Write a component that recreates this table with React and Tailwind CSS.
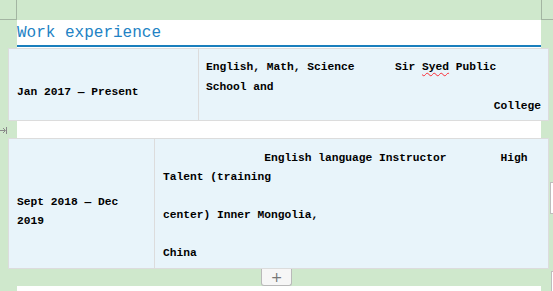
import React from "react";

const mono = { fontFamily: '"Liberation Mono", "DejaVu Sans Mono", monospace' };

function App() {
    return (
        <div className="relative w-[553px] h-[291px] overflow-hidden bg-[#cfe8cc] text-black" style={mono}>
            {/* crop marks */}
            <div className="flex h-[20px]">
                <div className="w-[17px] border-r border-b border-[#a3b5a2]"></div>
                <div className="w-[524px]"></div>
                <div className="flex-1 border-l border-b border-[#a3b5a2]"></div>
            </div>

            {/* title */}
            <div className="ml-[17px] w-[524px] bg-white">
                <div className="h-[27px] border-b-2 border-[#1a7fbd] text-[16px] leading-[25px] text-[#2282c4] pt-px">
                    Work experience
                </div>
                <div className="h-px"></div>
            </div>

            {/* row 1 */}
            <div className="ml-[8px] w-[541px] h-[73px] flex border border-[#dcdcdc] bg-[#e8f4fa] font-bold text-[11.25px] leading-[19.5px]">
                <div className="w-[190px] border-r border-[#dcdcdc] pl-[8px] pt-[34px] whitespace-pre">Jan 2017 — Present</div>
                <div className="flex-1 pl-[7px] pr-[7px] pt-[9px] whitespace-pre">
                    <div>English, Math, Science      Sir <span className="underline decoration-wavy decoration-red-500 decoration-1 underline-offset-2">Syed</span> Public</div>
                    <div>School and</div>
                    <div className="text-right">College</div>
                </div>
            </div>

            {/* gap */}
            <div className="flex h-[17px]">
                <div className="w-[17px] flex items-center">
                    <svg width="7" height="9" viewBox="0 0 7 9" className="mt-[1px]">
                        <path d="M0 4.5h5M3 2l2.5 2.5L3 7M6.5 1v7" stroke="#8a8a8a" strokeWidth="1" fill="none" />
                    </svg>
                </div>
                <div className="w-[524px] bg-white"></div>
            </div>

            {/* row 2 */}
            <div className="ml-[8px] w-[541px] h-[131px] flex border border-[#dcdcdc] bg-[#e8f4fa] font-bold text-[11.25px] leading-[19px]">
                <div className="w-[146px] border-r border-[#dcdcdc] pl-[8px] pt-[54px]">
                    <div className="whitespace-pre">Sept 2018 — Dec</div>
                    <div>2019</div>
                </div>
                <div className="flex-1 pl-[8px] pr-[7px] pt-[10px] whitespace-pre">
                    <div>{"               English language Instructor        High"}</div>
                    <div>Talent (training</div>
                    <div>&nbsp;</div>
                    <div>center) Inner Mongolia,</div>
                    <div>&nbsp;</div>
                    <div>China</div>
                </div>
            </div>

            {/* add row */}
            <div className="flex justify-center h-[17px]">
                <div className="w-[31px] h-[17px] bg-[#f6f6f6] border border-t-0 border-[#b9b9b9] rounded-b-[3px] flex items-center justify-center text-[#777] text-[14px] leading-none" style={{ fontFamily: '"DejaVu Sans", sans-serif' }}>
                    +
                </div>
            </div>
            <div className="ml-[17px] w-[524px] h-[10px] bg-white"></div>

            {/* edge widgets */}
            <div className="absolute left-[550px] top-[182px] w-[6px] h-[32px] bg-white border border-[#bdbdbd]"></div>
            <div className="absolute left-[551px] top-[271px] w-[6px] h-[24px] bg-white border border-[#bdbdbd]"></div>
        </div>
    );
}

export default App;
